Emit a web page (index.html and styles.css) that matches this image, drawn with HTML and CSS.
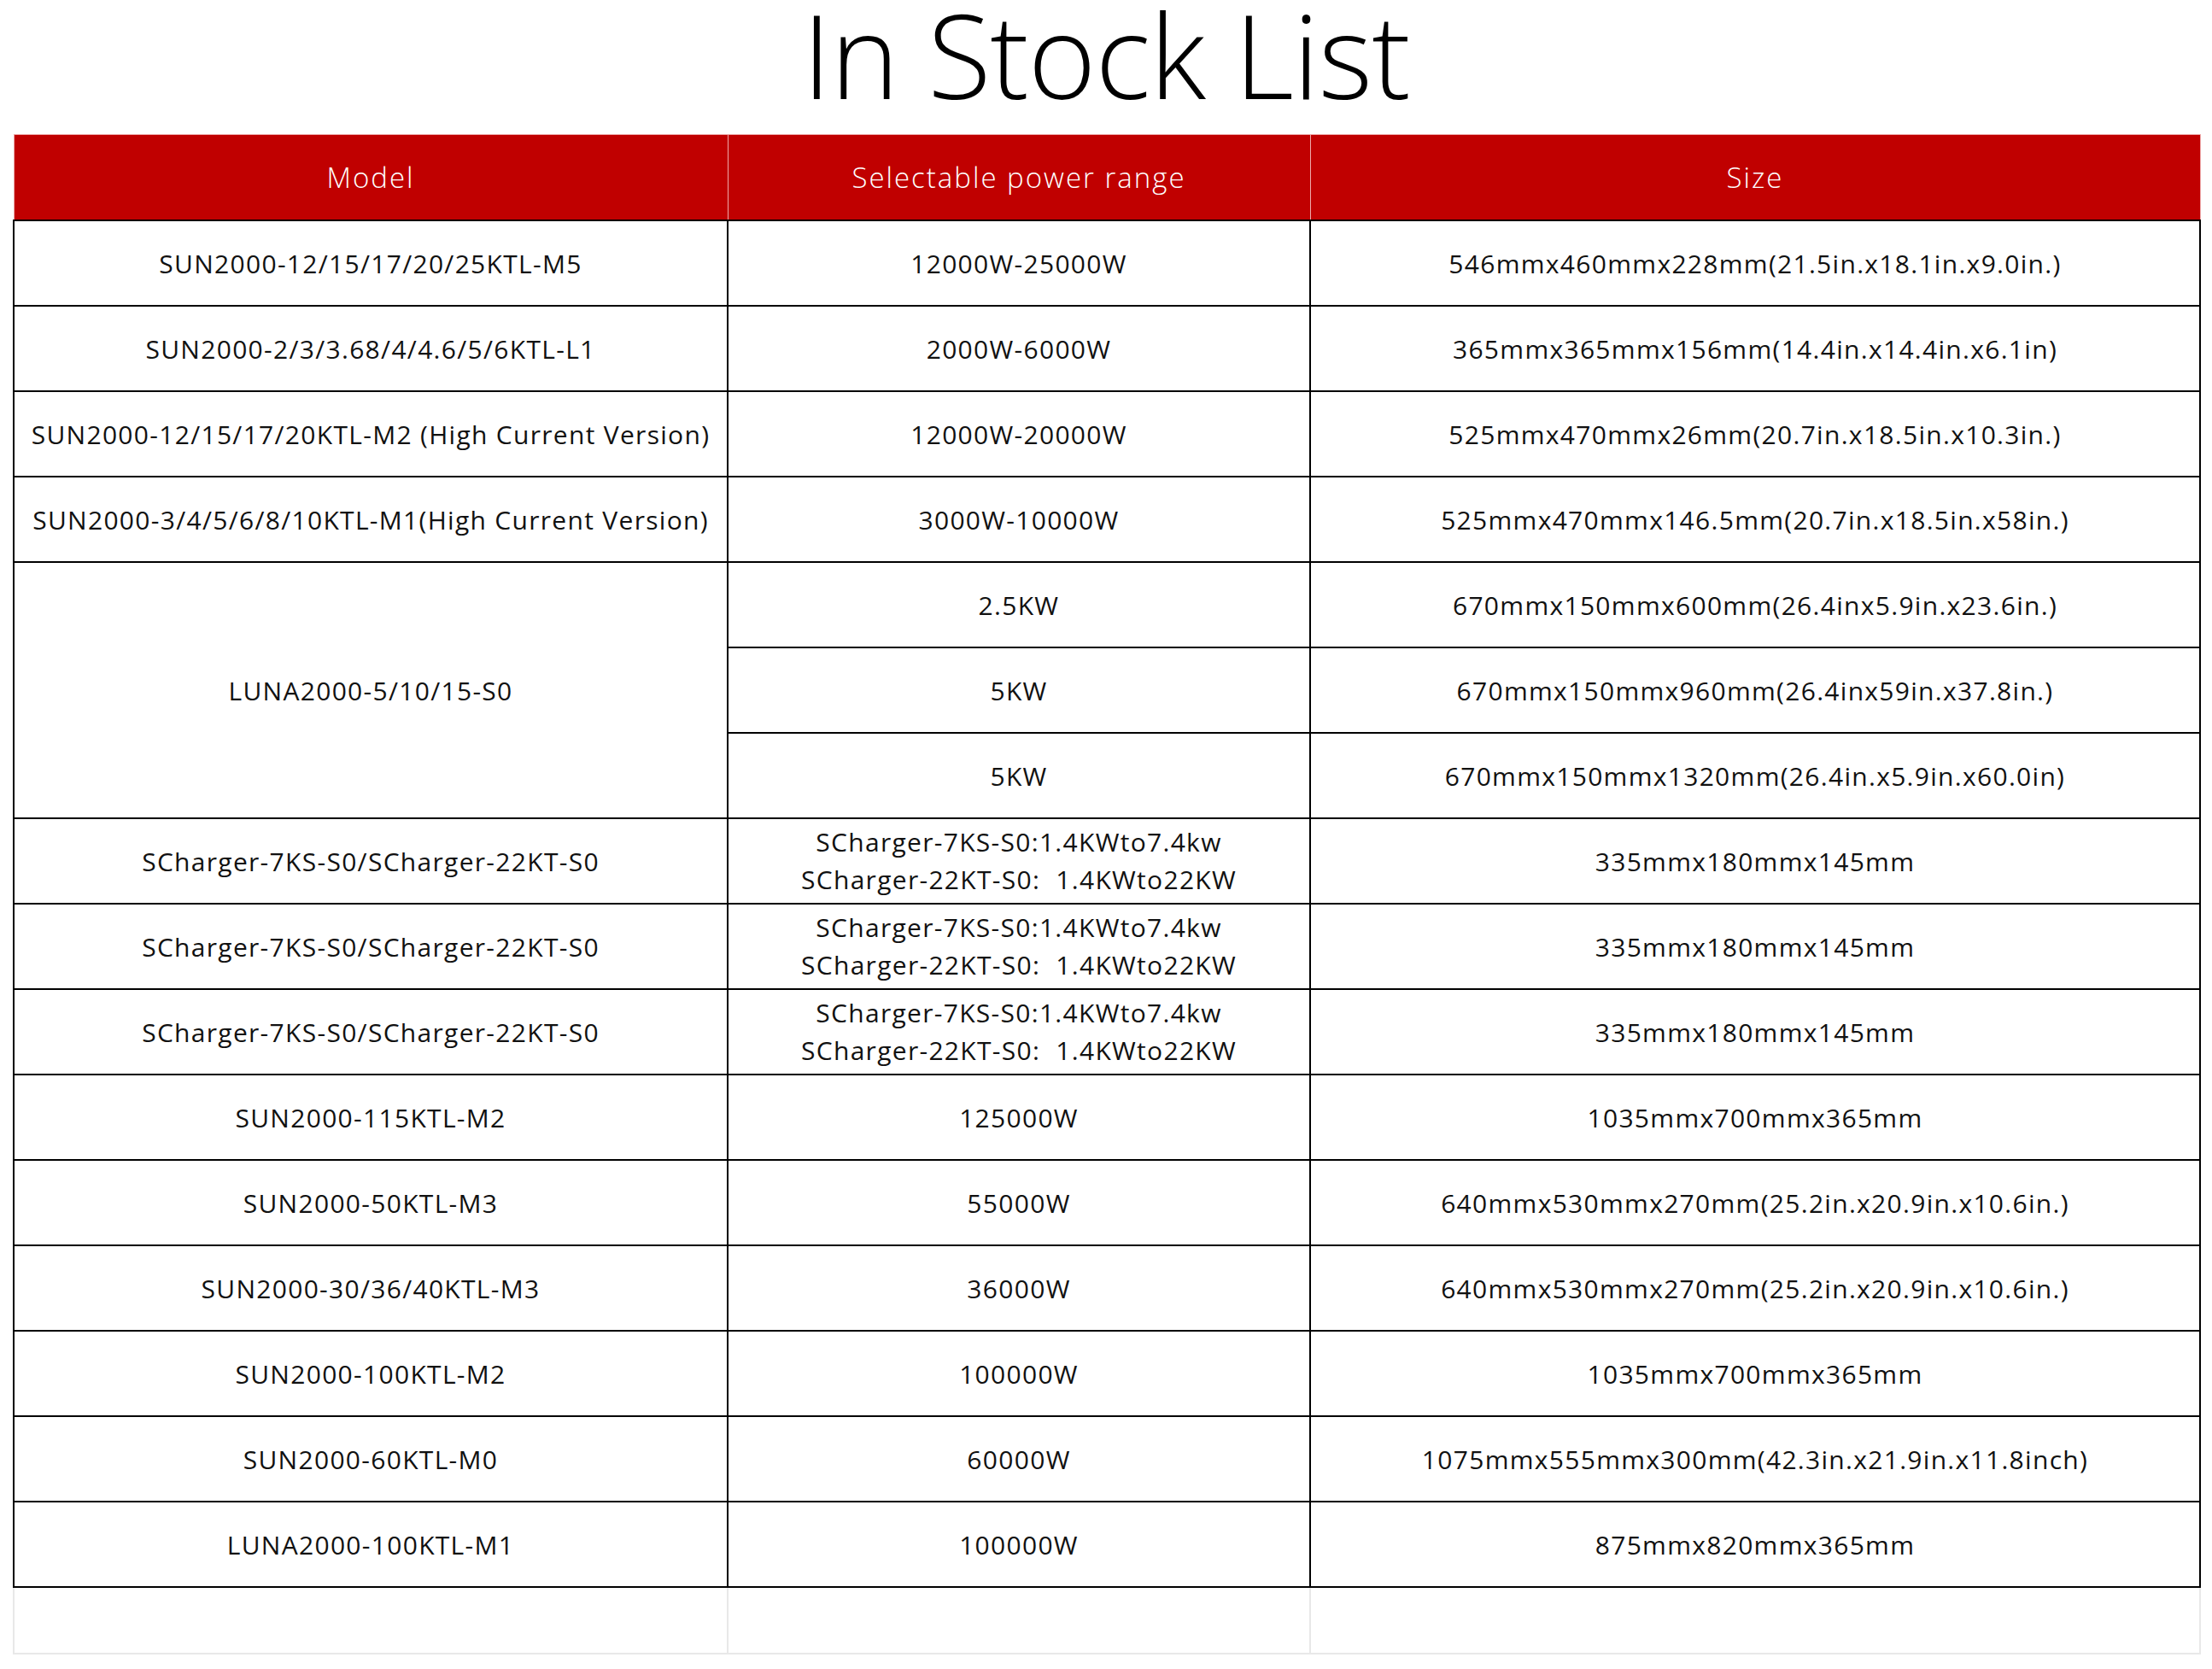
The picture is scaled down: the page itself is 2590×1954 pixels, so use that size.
FILE: index.html
```html
<!DOCTYPE html>
<html lang="en">
<head>
<meta charset="utf-8">
<title>In Stock List</title>
<link rel="stylesheet" href="styles.css">
</head>
<body>
<h1 class="title">In Stock List</h1>
<table class="stock">
  <colgroup>
    <col class="c-model">
    <col class="c-power">
    <col class="c-size">
  </colgroup>
  <thead>
    <tr class="head-row">
      <th>Model</th>
      <th>Selectable power range</th>
      <th>Size</th>
    </tr>
  </thead>
  <tbody>
    <tr><td>SUN2000-12/15/17/20/25KTL-M5</td><td>12000W-25000W</td><td>546mmx460mmx228mm(21.5in.x18.1in.x9.0in.)</td></tr>
    <tr><td>SUN2000-2/3/3.68/4/4.6/5/6KTL-L1</td><td>2000W-6000W</td><td>365mmx365mmx156mm(14.4in.x14.4in.x6.1in)</td></tr>
    <tr><td>SUN2000-12/15/17/20KTL-M2 (High Current Version)</td><td>12000W-20000W</td><td>525mmx470mmx26mm(20.7in.x18.5in.x10.3in.)</td></tr>
    <tr><td>SUN2000-3/4/5/6/8/10KTL-M1(High Current Version)</td><td>3000W-10000W</td><td>525mmx470mmx146.5mm(20.7in.x18.5in.x58in.)</td></tr>
    <tr><td rowspan="3">LUNA2000-5/10/15-S0</td><td>2.5KW</td><td>670mmx150mmx600mm(26.4inx5.9in.x23.6in.)</td></tr>
    <tr><td>5KW</td><td>670mmx150mmx960mm(26.4inx59in.x37.8in.)</td></tr>
    <tr><td>5KW</td><td>670mmx150mmx1320mm(26.4in.x5.9in.x60.0in)</td></tr>
    <tr><td>SCharger-7KS-S0/SCharger-22KT-S0</td><td class="two"><span class="ln">SCharger-7KS-S0:1.4KWto7.4kw</span><span class="ln">SCharger-22KT-S0:&nbsp; 1.4KWto22KW</span></td><td>335mmx180mmx145mm</td></tr>
    <tr><td>SCharger-7KS-S0/SCharger-22KT-S0</td><td class="two"><span class="ln">SCharger-7KS-S0:1.4KWto7.4kw</span><span class="ln">SCharger-22KT-S0:&nbsp; 1.4KWto22KW</span></td><td>335mmx180mmx145mm</td></tr>
    <tr><td>SCharger-7KS-S0/SCharger-22KT-S0</td><td class="two"><span class="ln">SCharger-7KS-S0:1.4KWto7.4kw</span><span class="ln">SCharger-22KT-S0:&nbsp; 1.4KWto22KW</span></td><td>335mmx180mmx145mm</td></tr>
    <tr><td>SUN2000-115KTL-M2</td><td>125000W</td><td>1035mmx700mmx365mm</td></tr>
    <tr><td>SUN2000-50KTL-M3</td><td>55000W</td><td>640mmx530mmx270mm(25.2in.x20.9in.x10.6in.)</td></tr>
    <tr><td>SUN2000-30/36/40KTL-M3</td><td>36000W</td><td>640mmx530mmx270mm(25.2in.x20.9in.x10.6in.)</td></tr>
    <tr><td>SUN2000-100KTL-M2</td><td>100000W</td><td>1035mmx700mmx365mm</td></tr>
    <tr><td>SUN2000-60KTL-M0</td><td>60000W</td><td>1075mmx555mmx300mm(42.3in.x21.9in.x11.8inch)</td></tr>
    <tr><td>LUNA2000-100KTL-M1</td><td>100000W</td><td>875mmx820mmx365mm</td></tr>
    <tr class="empty-row"><td></td><td></td><td></td></tr>
  </tbody>
</table>
</body>
</html>
```

FILE: styles.css
```css
html, body {
  margin: 0;
  padding: 0;
  background: #ffffff;
}

body {
  font-family: "Open Sans", "Liberation Sans", sans-serif;
  color: #111111;
}

.title {
  margin: 0 0 29px 0;
  height: 128px;
  font-size: 136px;
  line-height: 128px;
  font-weight: 300;
  text-align: center;
  color: #000000;
  letter-spacing: -1px;
}

.stock {
  margin-left: 15px;
  width: 2560px;
  table-layout: fixed;
  border-collapse: collapse;
}

.c-model { width: 836px; }
.c-power { width: 682px; }
.c-size { width: 1042px; }

.head-row th {
  height: 99px;
  padding: 0;
  background: #c00000;
  color: #ffffff;
  font-weight: 300;
  font-size: 33px;
  letter-spacing: 2px;
  border: 1px solid #eeaaaa;
  text-align: center;
  vertical-align: middle;
}

.stock td {
  height: 98px;
  padding: 0;
  border: 2px solid #000000;
  font-size: 30px;
  font-weight: 400;
  letter-spacing: 1.3px;
  text-align: center;
  vertical-align: middle;
  white-space: nowrap;
}

.stock td.two {
  line-height: 44px;
}

.ln {
  display: block;
}

.stock .empty-row td {
  height: 76px;
  border: 2px solid #e8e8e8;
}
```
